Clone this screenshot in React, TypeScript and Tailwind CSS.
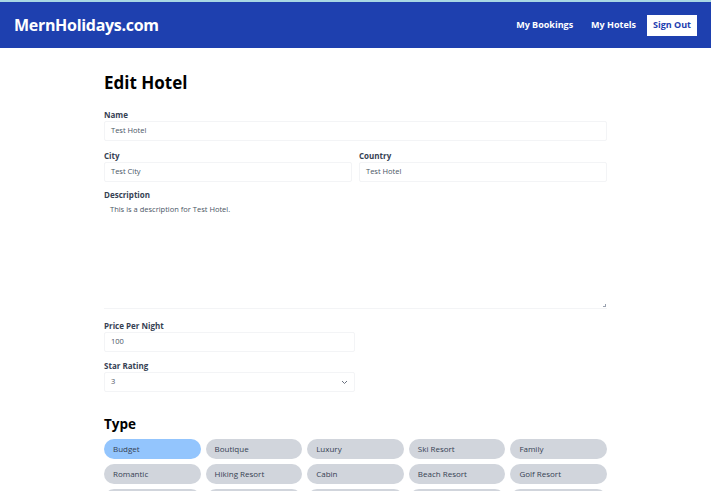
import React from "react";

const hotelTypes = [
  "Budget",
  "Boutique",
  "Luxury",
  "Ski Resort",
  "Family",
  "Romantic",
  "Hiking Resort",
  "Cabin",
  "Beach Resort",
  "Golf Resort",
  "Motel",
  "All Inclusive",
  "Pet Friendly",
  "Self Catering",
  "Eco Friendly",
];

// Single labelled text input
function Field({ label, value, className = "" }: { label: string; value: string; className?: string }) {
  return (
    <label className={`flex flex-col ${className}`}>
      <span className="text-[8px] font-bold text-gray-700 leading-[10px] mb-[1px]">{label}</span>
      <div className="h-[20px] border border-gray-100 rounded-[2px] px-[6px] flex items-center text-[7.5px] text-gray-600">
        {value}
      </div>
    </label>
  );
}

export default function App() {
  return (
    <div className="w-[711px] bg-white" style={{ fontFamily: '"Open Sans", "Noto Sans", sans-serif' }}>
      <div className="h-[2px] bg-[#a8d8e4]" />
      {/* Header */}
      <header className="h-[46px] bg-[#1e40af] flex items-center justify-between pl-[14px] pr-[14px]">
        <span className="text-white font-bold text-[16px] tracking-[-0.3px]">MernHolidays.com</span>
        <nav className="flex items-center">
          <span className="text-white font-bold text-[9px] mr-[18px]">My Bookings</span>
          <span className="text-white font-bold text-[9px] mr-[11px]">My Hotels</span>
          <span className="bg-white text-[#1e40af] font-bold text-[9px] h-[21px] px-[6px] flex items-center">Sign Out</span>
        </nav>
      </header>

      {/* Form */}
      <main className="w-[503px] ml-[104px] flex flex-col pb-[40px]">
        <h1 className="text-[17px] font-bold text-black mt-[24px] leading-[22px]">Edit Hotel</h1>
        <Field label="Name" value="Test Hotel" className="mt-[16px]" />
        <div className="flex gap-[7px] mt-[10px]">
          <Field label="City" value="Test City" className="flex-1" />
          <Field label="Country" value="Test Hotel" className="flex-1" />
        </div>
        <label className="flex flex-col mt-[8px]">
          <span className="text-[8px] font-bold text-gray-700 leading-[10px] mb-[1px]">Description</span>
          <div className="h-[108px] border-b border-gray-100 px-[6px] pt-[3px] text-[7.5px] text-gray-600 relative">
            This is a description for Test Hotel.
            <span className="absolute right-[1px] bottom-[1px] w-[3px] h-[3px] border-r border-b border-gray-400" />
          </div>
        </label>
        <Field label="Price Per Night" value="100" className="mt-[12px] w-[251px]" />
        <label className="flex flex-col mt-[9px] w-[251px]">
          <span className="text-[8px] font-bold text-gray-700 leading-[10px] mb-[1px]">Star Rating</span>
          <div className="h-[20px] border border-gray-100 rounded-[2px] px-[6px] flex items-center justify-between text-[7.5px] text-gray-600">
            <span>3</span>
            <svg width="7" height="5" viewBox="0 0 7 5" fill="none">
              <path d="M1 1l2.5 2.5L6 1" stroke="#6b7280" strokeWidth="1" />
            </svg>
          </div>
        </label>

        <h2 className="text-[13.5px] font-bold text-black mt-[23px] leading-[18px]">Type</h2>
        <div className="grid grid-cols-5 gap-x-[5px] gap-y-[5px] mt-[6px]">
          {hotelTypes.map((t, i) => (
            <div
              key={t}
              className={`h-[20px] rounded-full flex items-center px-[9px] text-[8px] text-gray-700 ${
                i === 0 ? "bg-[#93c5fd]" : "bg-gray-300"
              }`}
            >
              {t}
            </div>
          ))}
        </div>
      </main>
    </div>
  );
}
